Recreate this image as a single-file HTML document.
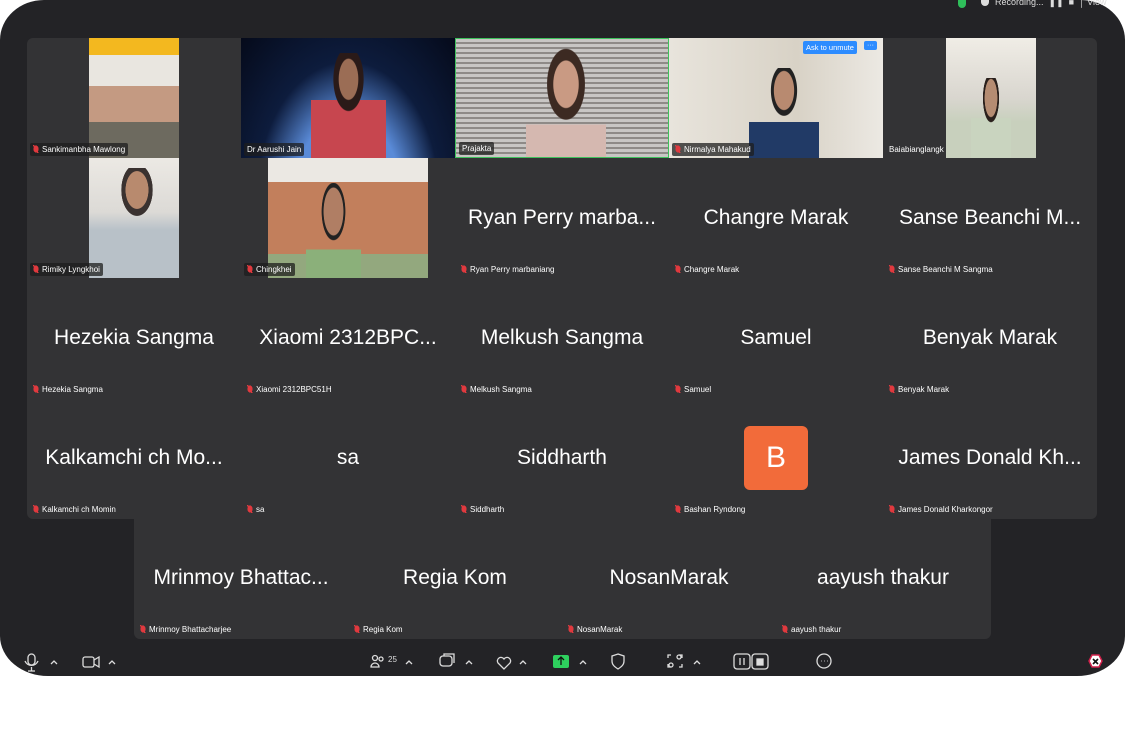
<!DOCTYPE html>
<html><head><meta charset="utf-8"><style>
*{margin:0;padding:0;box-sizing:border-box}
body{width:1125px;height:750px;background:#fff;font-family:"Liberation Sans",sans-serif;position:relative;overflow:hidden}
.win{position:absolute;left:0;top:0;width:1125px;height:676px;background:#232326;border-radius:44px 44px 48px 48px/40px 40px 40px 40px}
.grid{position:absolute;left:27px;top:38px;width:1070px;height:481px;background:#333335;border-radius:6px}
.row5{position:absolute;left:134px;top:518px;width:857px;height:121px;background:#333335;border-radius:0 0 6px 6px}
.t{position:absolute;width:214px;height:120px;overflow:hidden}
.nm{position:absolute;left:0;right:0;top:0;bottom:0;display:flex;align-items:center;justify-content:center;color:#fff;font-size:21px;white-space:nowrap;padding:0 12px}
.lb{position:absolute;left:3px;bottom:2px;background:rgba(30,30,30,.75);color:#fff;font-size:8px;padding:2px 3px 2px 12px;border-radius:2px;white-space:nowrap}
.lb:before{content:"";position:absolute;left:3px;top:2px;width:6px;height:8px;background:linear-gradient(60deg,transparent 40%,#e0393e 40%,#e0393e 55%,transparent 55%),radial-gradient(#e0393e 60%,transparent 62%)}
.lb.n{padding-left:3px}.lb.n:before{display:none}
.v{position:absolute;top:0;height:120px}
.ic{position:absolute;color:#ddd;font-size:10px}
</style></head><body>
<div class="win">
<div style="position:absolute;left:958px;top:0;width:8px;height:8px;background:#2fbe5a;border-radius:0 0 4px 4px"></div>
<div style="position:absolute;left:981px;top:0;width:8px;height:6px;background:#ddd;border-radius:0 0 4px 4px"></div>
<div style="position:absolute;left:995px;top:-3px;color:#ddd;font-size:9px">Recording...&nbsp;&nbsp;❚❚&nbsp;&nbsp;■&nbsp;&nbsp;│&nbsp;View</div>
<div class="grid">
<div class="t" style="left:0;top:0"><div class="v" style="left:62px;width:90px;background:linear-gradient(#f3b81f 0 14%,#e9e6e0 14% 40%,#c49a82 40% 70%,#6d6a5f 70%)"></div><div class="lb">Sankimanbha Mawlong</div></div>
<div class="t" style="left:214px;top:0"><div class="v" style="left:0;width:214px;background:radial-gradient(ellipse at 50% 130%,#5a8bd8 0 35%,#0d1c3d 60%,#050a1a)"></div><div class="v" style="left:70px;top:15px;width:75px;height:105px;background:radial-gradient(ellipse at 50% 25%,#9b6d55 0 18%,#2a1a18 19% 28%,transparent 29%),linear-gradient(transparent 45%,#c7464f 45%);border-radius:30px 30px 0 0"></div><div class="lb n">Dr Aarushi Jain</div></div>
<div class="t" style="left:428px;top:0;border:1.5px solid #3ec15c"><div class="v" style="left:0;width:214px;background:repeating-linear-gradient(#c8c6c4 0 3px,#8e8a87 3px 5px)"></div><div class="v" style="left:70px;top:5px;width:80px;height:115px;background:radial-gradient(ellipse at 50% 35%,#c99a83 0 22%,#3c2a22 23% 33%,transparent 34%),linear-gradient(transparent 70%,#d5b8b0 70%);"></div><div class="lb n">Prajakta</div></div>
<div class="t" style="left:642px;top:0"><div class="v" style="left:0;width:214px;background:linear-gradient(90deg,#e8e4dc,#d8d2c6 60%,#ece9e3)"></div><div class="v" style="left:80px;top:30px;width:70px;height:90px;background:radial-gradient(ellipse at 50% 25%,#b88a70 0 20%,#222 21% 26%,transparent 27%),linear-gradient(transparent 60%,#213a66 60%)"></div><div style="position:absolute;left:134px;top:3px;background:#2d8cff;color:#fff;font-size:7.5px;padding:2px 3px;border-radius:2px">Ask to unmute</div><div style="position:absolute;left:195px;top:3px;background:#2d8cff;color:#fff;font-size:7px;padding:1px 3px;border-radius:2px">···</div><div class="lb">Nirmalya Mahakud</div></div>
<div class="t" style="left:856px;top:0"><div class="v" style="left:63px;width:90px;background:linear-gradient(#f0ede6,#d9d6cf 50%,#c8d0bd 70%)"></div><div class="v" style="left:88px;top:40px;width:40px;height:80px;background:radial-gradient(ellipse at 50% 25%,#b58c72 0 22%,#2a201c 23% 28%,transparent 29%),linear-gradient(transparent 50%,#c9d4bf 50%)"></div><div class="lb n" style="background:none">Baiabianglangk</div></div>
<div class="t" style="left:0;top:120px"><div class="v" style="left:62px;width:90px;background:linear-gradient(#ece9e4,#dcdad6 45%,#b8c1c8 60%)"></div><div class="v" style="left:90px;top:10px;width:40px;height:55px;background:radial-gradient(ellipse at 50% 40%,#b88a6e 0 40%,#3a3230 41% 55%,transparent 56%)"></div><div class="lb">Rimiky Lyngkhoi</div></div>
<div class="t" style="left:214px;top:120px"><div class="v" style="left:27px;width:160px;background:linear-gradient(#ebe8e3 0 20%,#c27f5c 20% 80%,#93a87e 80%)"></div><div class="v" style="left:65px;top:25px;width:55px;height:95px;background:radial-gradient(ellipse at 50% 30%,#b07e64 0 25%,#222 26% 30%,transparent 31%),linear-gradient(transparent 70%,#8bb07a 70%)"></div><div class="lb">Chingkhei</div></div>
<div class="t" style="left:428px;top:120px"><div class="nm">Ryan Perry marba...</div><div class="lb" style="background:none">Ryan Perry marbaniang</div></div>
<div class="t" style="left:642px;top:120px"><div class="nm">Changre Marak</div><div class="lb" style="background:none">Changre Marak</div></div>
<div class="t" style="left:856px;top:120px"><div class="nm">Sanse Beanchi M...</div><div class="lb" style="background:none">Sanse Beanchi M Sangma</div></div>
<div class="t" style="left:0;top:240px"><div class="nm">Hezekia Sangma</div><div class="lb" style="background:none">Hezekia Sangma</div></div>
<div class="t" style="left:214px;top:240px"><div class="nm">Xiaomi 2312BPC...</div><div class="lb" style="background:none">Xiaomi 2312BPC51H</div></div>
<div class="t" style="left:428px;top:240px"><div class="nm">Melkush Sangma</div><div class="lb" style="background:none">Melkush Sangma</div></div>
<div class="t" style="left:642px;top:240px"><div class="nm">Samuel</div><div class="lb" style="background:none">Samuel</div></div>
<div class="t" style="left:856px;top:240px"><div class="nm">Benyak Marak</div><div class="lb" style="background:none">Benyak Marak</div></div>
<div class="t" style="left:0;top:360px"><div class="nm">Kalkamchi ch Mo...</div><div class="lb" style="background:none">Kalkamchi ch Momin</div></div>
<div class="t" style="left:214px;top:360px"><div class="nm">sa</div><div class="lb" style="background:none">sa</div></div>
<div class="t" style="left:428px;top:360px"><div class="nm">Siddharth</div><div class="lb" style="background:none">Siddharth</div></div>
<div class="t" style="left:642px;top:360px"><div style="position:absolute;left:75px;top:28px;width:64px;height:64px;background:#f26b3a;border-radius:6px;color:#fff;font-size:30px;display:flex;align-items:center;justify-content:center">B</div><div class="lb" style="background:none">Bashan Ryndong</div></div>
<div class="t" style="left:856px;top:360px"><div class="nm">James Donald Kh...</div><div class="lb" style="background:none">James Donald Kharkongor</div></div>
</div>
<div class="row5">
<div class="t" style="left:0;top:0"><div class="nm">Mrinmoy Bhattac...</div><div class="lb" style="background:none">Mrinmoy Bhattacharjee</div></div>
<div class="t" style="left:214px;top:0"><div class="nm">Regia Kom</div><div class="lb" style="background:none">Regia Kom</div></div>
<div class="t" style="left:428px;top:0"><div class="nm">NosanMarak</div><div class="lb" style="background:none">NosanMarak</div></div>
<div class="t" style="left:642px;top:0"><div class="nm">aayush thakur</div><div class="lb" style="background:none">aayush thakur</div></div>
</div>
<svg style="position:absolute;left:0;top:648px" width="1125" height="28" fill="none" stroke="#ddd" stroke-width="1.3">
<rect x="28" y="6" width="7" height="11" rx="3.5"/><path d="M25 13a7 7 0 0 0 13 0M31.5 19v4M28 23h7"/>
<path d="M51 16l3-3 3 3M109 16l3-3 3 3M406 16l3-3 3 3M466 16l3-3 3 3M520 16l3-3 3 3M580 16l3-3 3 3M694 16l3-3 3 3"/>
<rect x="83" y="9" width="11" height="10" rx="2"/><path d="M94 12l5-3v10l-5-3"/>
<circle cx="375" cy="10" r="2.5"/><path d="M371 19a4 4 0 0 1 8 0z"/><circle cx="381" cy="11" r="2"/>
<rect x="440" y="8" width="12" height="10" rx="3"/><path d="M444 8v-2h10v9"/>
<path d="M504 21l-6-6a3.5 3.5 0 0 1 6-4a3.5 3.5 0 0 1 6 4z"/>
<rect x="553" y="7" width="16" height="13" rx="2" fill="#2ed05e" stroke="none"/><path d="M561 17v-7M558 12l3-3 3 3" stroke="#111"/>
<path d="M618 6l6 2v5c0 4-3 6-6 8-3-2-6-4-6-8v-5z"/>
<path d="M668 10v-3h3M682 10v-3h-3M668 16v3h3M682 16v3h-3"/><circle cx="679" cy="9" r="2"/><circle cx="671" cy="17" r="2"/>
<rect x="734" y="6" width="16" height="15" rx="3"/><path d="M740 10v7M744 10v7"/><rect x="752" y="6" width="16" height="15" rx="3"/><rect x="757" y="11" width="6" height="6" fill="#ddd"/>
<circle cx="824" cy="13" r="7"/><path d="M821 13h.5M824 13h.5M827 13h.5" stroke-width="1.6"/>
<path d="M1092 7h7l3 6-3 6h-7l-3-6z" stroke="#d0204a" fill="#fff" stroke-width="1.5"/><path d="M1093 11l5 5M1098 11l-5 5" stroke="#111" stroke-width="1.6"/>
</svg>
<div class="ic" style="left:388px;top:655px;font-size:8px">25</div>
</div>
</body></html>
